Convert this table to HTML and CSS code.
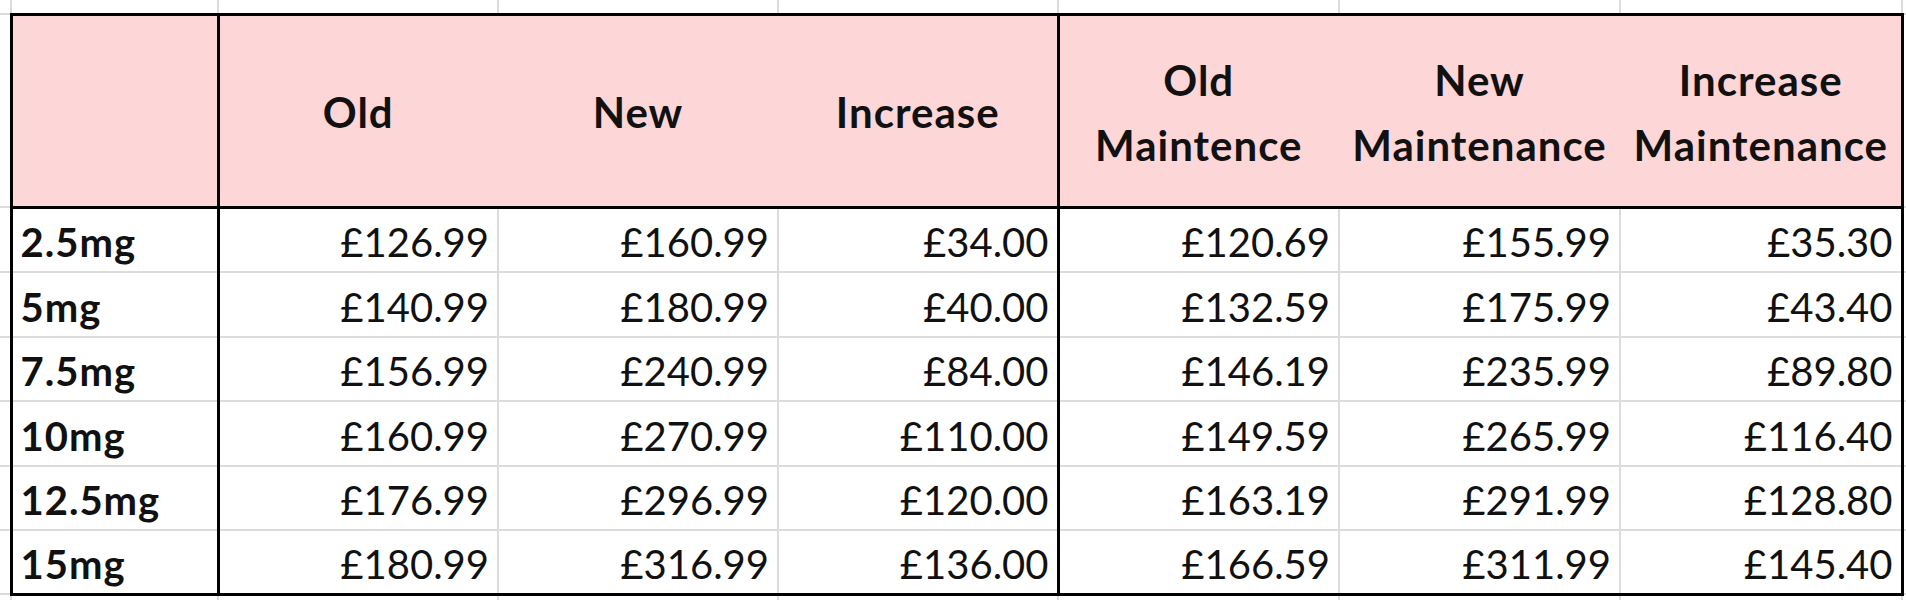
FILE: index.html
```html
<!DOCTYPE html>
<html lang="en">
<head>
<meta charset="utf-8">
<title>Price increase</title>
<link rel="stylesheet" href="styles.css">
</head>
<body>
<table class="sheet">
  <colgroup>
    <col class="c-edge-l">
    <col class="c-label">
    <col class="c-val">
    <col class="c-val">
    <col class="c-val">
    <col class="c-val-b">
    <col class="c-val-b">
    <col class="c-val-c">
    <col class="c-edge-r">
  </colgroup>
  <tr class="r-top">
    <td class="edge el"></td><td class="edge"></td><td class="edge"></td><td class="edge"></td><td class="edge"></td><td class="edge"></td><td class="edge"></td><td class="edge"></td><td class="edge er"></td>
  </tr>
  <tr class="r-head">
    <td class="edge el"></td>
    <th class="h h-first"></th>
    <th class="h">Old</th>
    <th class="h">New</th>
    <th class="h h-sep">Increase</th>
    <th class="h">Old<br>Maintence</th>
    <th class="h">New<br>Maintenance</th>
    <th class="h h-last">Increase<br>Maintenance</th>
    <td class="edge er"></td>
  </tr>
  <tr class="r-data">
    <td class="edge el"></td>
    <td class="lab">2.5mg</td><td class="num">£126.99</td><td class="num">£160.99</td><td class="num sep">£34.00</td><td class="num">£120.69</td><td class="num">£155.99</td><td class="num last">£35.30</td>
    <td class="edge er"></td>
  </tr>
  <tr class="r-data">
    <td class="edge el"></td>
    <td class="lab">5mg</td><td class="num">£140.99</td><td class="num">£180.99</td><td class="num sep">£40.00</td><td class="num">£132.59</td><td class="num">£175.99</td><td class="num last">£43.40</td>
    <td class="edge er"></td>
  </tr>
  <tr class="r-data r-short">
    <td class="edge el"></td>
    <td class="lab">7.5mg</td><td class="num">£156.99</td><td class="num">£240.99</td><td class="num sep">£84.00</td><td class="num">£146.19</td><td class="num">£235.99</td><td class="num last">£89.80</td>
    <td class="edge er"></td>
  </tr>
  <tr class="r-data">
    <td class="edge el"></td>
    <td class="lab">10mg</td><td class="num">£160.99</td><td class="num">£270.99</td><td class="num sep">£110.00</td><td class="num">£149.59</td><td class="num">£265.99</td><td class="num last">£116.40</td>
    <td class="edge er"></td>
  </tr>
  <tr class="r-data r-short">
    <td class="edge el"></td>
    <td class="lab">12.5mg</td><td class="num">£176.99</td><td class="num">£296.99</td><td class="num sep">£120.00</td><td class="num">£163.19</td><td class="num">£291.99</td><td class="num last">£128.80</td>
    <td class="edge er"></td>
  </tr>
  <tr class="r-data r-short r-last">
    <td class="edge el"></td>
    <td class="lab">15mg</td><td class="num">£180.99</td><td class="num">£316.99</td><td class="num sep">£136.00</td><td class="num">£166.59</td><td class="num">£311.99</td><td class="num last">£145.40</td>
    <td class="edge er"></td>
  </tr>
  <tr class="r-bottom">
    <td class="edge el"></td><td class="edge"></td><td class="edge"></td><td class="edge"></td><td class="edge"></td><td class="edge"></td><td class="edge"></td><td class="edge"></td><td class="edge er"></td>
  </tr>
</table>
</body>
</html>
```
FILE: styles.css
```css
html, body {
  margin: 0;
  padding: 0;
  background: #ffffff;
}

body {
  width: 1906px;
  height: 600px;
  overflow: hidden;
  font-family: Lato, "Open Sans", "Liberation Sans", sans-serif;
  color: #111111;
}

.sheet {
  width: 1906px;
  table-layout: fixed;
  border-collapse: collapse;
  border-spacing: 0;
}

.c-edge-l { width: 11px; }
.c-label { width: 207px; }
.c-val { width: 280px; }
.c-val-b { width: 281px; }
.c-val-c { width: 282px; }
.c-edge-r { width: 4px; }

.sheet td,
.sheet th {
  border: 2px solid #dcdcdc;
  padding: 0;
  overflow: hidden;
  white-space: nowrap;
}

.r-top { height: 14px; }
.r-head { height: 193px; }
.r-data { height: 65px; }
.r-short { height: 64px; }
.r-bottom { height: 6px; }

.sheet .edge {
  font-size: 0;
  line-height: 0;
}
.sheet .r-top td { border-top: none; }
.sheet .r-bottom td { border-bottom: none; }
.sheet .el { border-left: none; }
.sheet .er { border-right: none; }

/* header */
.sheet .h {
  background: #fdd6d7;
  font-weight: 700;
  font-size: 42px;
  letter-spacing: 1px;
  line-height: 65px;
  text-align: center;
  vertical-align: middle;
  padding-top: 4px;
  border-top: 3px solid #000;
  border-bottom: 3px solid #000;
  border-left: 2px solid #fdd6d7;
  border-right: 2px solid #fdd6d7;
}
.sheet .h-first {
  border-left: 3px solid #000;
  border-right: 3px solid #000;
}
.sheet .h-sep { border-right: 3px solid #000; }
.sheet .h-last { border-right: 3px solid #000; }

/* data */
.sheet .lab,
.sheet .num {
  font-size: 40px;
  line-height: 46px;
  vertical-align: bottom;
  padding-bottom: 6px;
}
.sheet .lab {
  font-weight: 700;
  letter-spacing: 1px;
  text-align: left;
  padding-left: 8px;
  border-left: 3px solid #000;
  border-right: 3px solid #000;
}
.sheet .num {
  text-align: right;
  padding-right: 8px;
}
.sheet .sep { border-right: 3px solid #000; }
.sheet .last { border-right: 3px solid #000; }
.sheet .r-last .lab,
.sheet .r-last .num { border-bottom: 3px solid #000; }
```
